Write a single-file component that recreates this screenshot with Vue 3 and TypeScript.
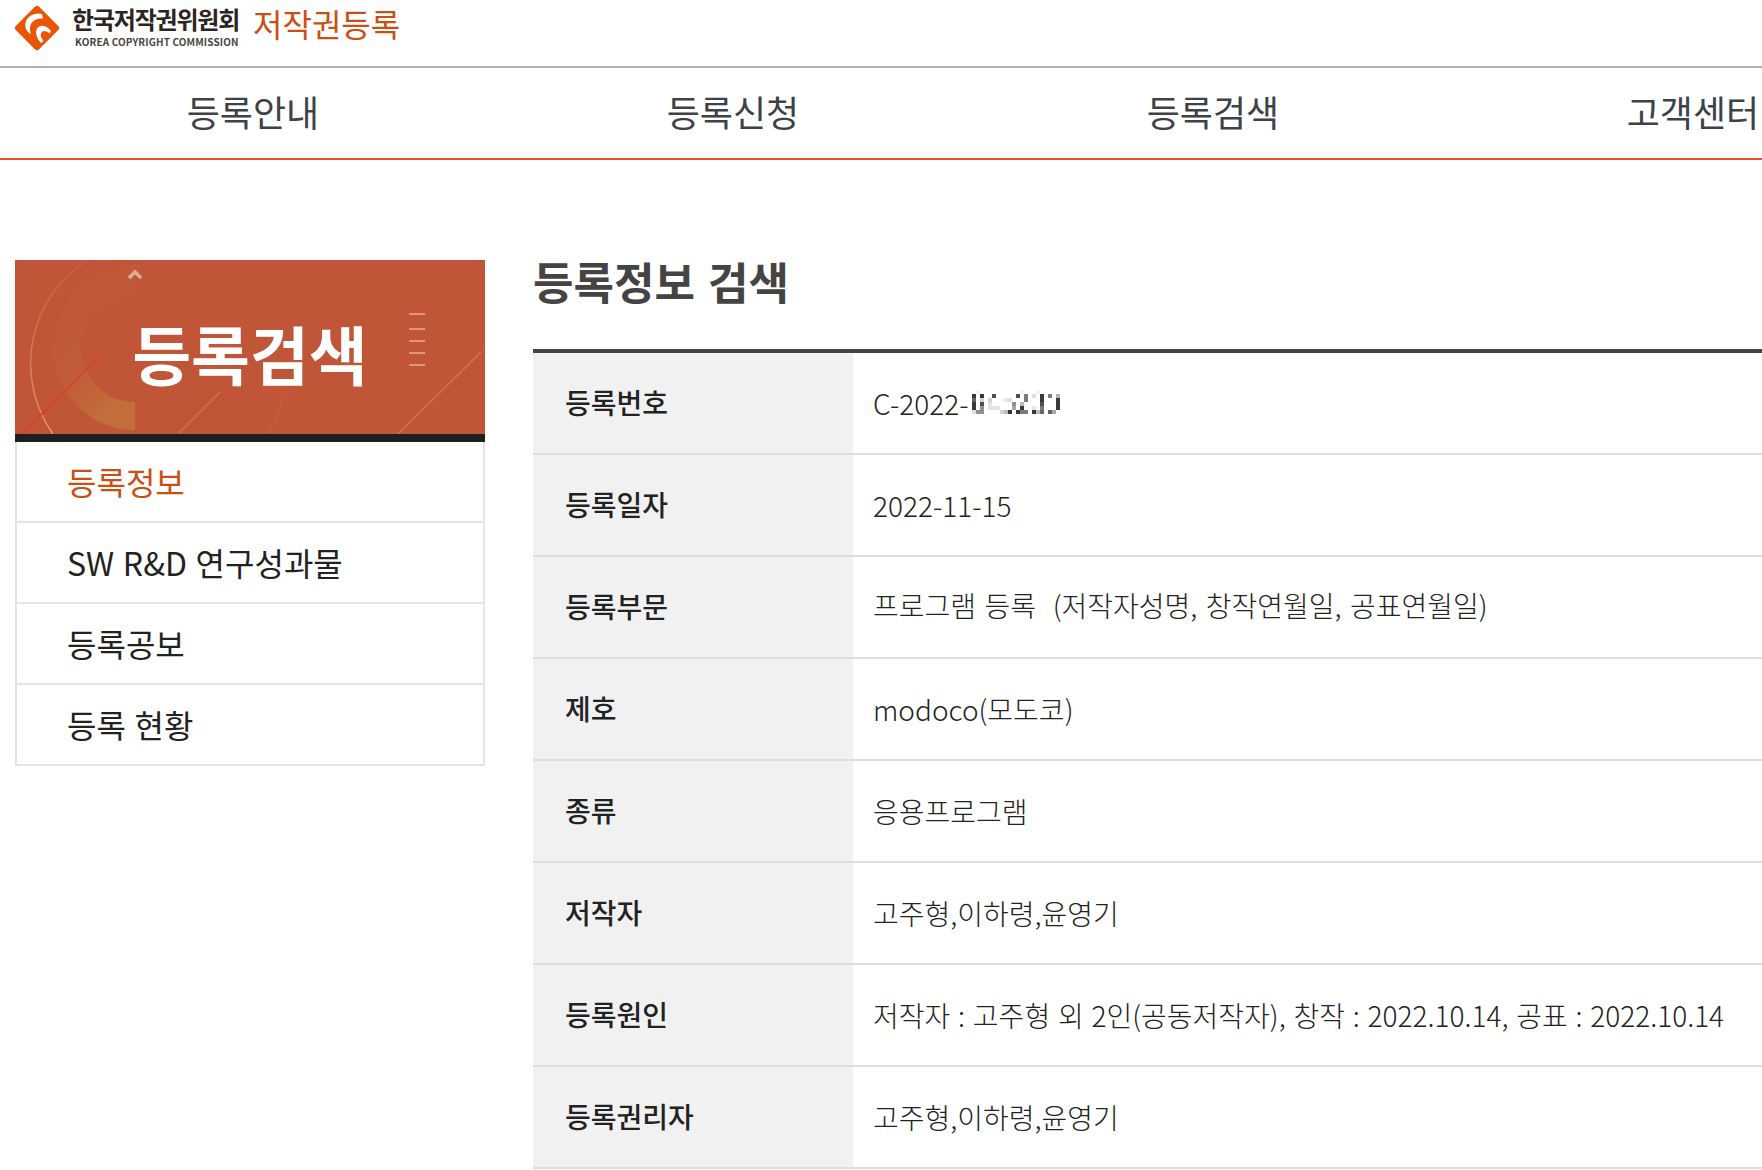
<script setup lang="ts">
interface Row { label: string; value: string; mosaic?: boolean; lift?: boolean }
const rows: Row[] = [
  { label: '등록번호', value: 'C-2022-', mosaic: true },
  { label: '등록일자', value: '2022-11-15' },
  { label: '등록부문', value: '프로그램 등록 \u00a0(저작자성명, 창작연월일, 공표연월일)', lift: true },
  { label: '제호', value: 'modoco(모도코)' },
  { label: '종류', value: '응용프로그램' },
  { label: '저작자', value: '고주형,이하령,윤영기' },
  { label: '등록원인', value: '저작자 : 고주형 외 2인(공동저작자), 창작 : 2022.10.14, 공표 : 2022.10.14' },
  { label: '등록권리자', value: '고주형,이하령,윤영기' },
]
const nav = ['등록안내', '등록신청', '등록검색', '고객센터']
const side = ['등록정보', 'SW R&D 연구성과물', '등록공보', '등록 현황']
const mosaicRows: [number, number][][] = [
  [[1, 0.05], [12, 0.05], [16, 0.06]],
  [[0, 0.9], [2, 0.9], [5, 0.8], [11, 0.8], [13, 0.6], [15, 0.15], [17, 0.9], [19, 0.6], [21, 0.35]],
  [[0, 0.7], [2, 0.2], [4, 0.2], [8, 0.1], [9, 0.15], [13, 0.6], [17, 0.9], [21, 0.9]],
  [[0, 0.9], [2, 0.8], [4, 0.12], [10, 0.5], [12, 0.3], [17, 0.8], [21, 0.9]],
  [[0, 0.9], [2, 0.5], [4, 0.12], [5, 0.12], [6, 0.12], [10, 0.4], [12, 0.9], [15, 0.1], [17, 0.6], [21, 0.9]],
  [[0, 0.15], [1, 0.5], [2, 0.5], [7, 0.2], [8, 0.3], [9, 0.9], [11, 0.9], [12, 0.6], [13, 0.6], [15, 0.9], [16, 0.3], [17, 0.7], [19, 0.7], [20, 0.4]],
]
const mosaic = mosaicRows.flatMap((cells, y) => cells.map(([x, o]) => ({ x, y, o })))
</script>

<template>
  <div class="page">
    <header class="top">
      <svg class="logo" viewBox="0 0 50 50" width="50" height="50" aria-hidden="true">
        <rect x="8.5" y="8.5" width="33" height="33" rx="3" transform="rotate(45 25 25)" fill="#ea5504" />
        <path d="M30 11 C23 9 15 13 13.5 20 C12.5 25 15 29 19 31 C17.5 27 17.5 24 19 21 C21 17 26 15 31 15.5 Z" fill="#fff" />
        <path d="M39 28 C35 23 30 21.5 26.5 24 C22.5 27 23.5 34 29 40 L31.5 38 C28.5 34 28 31 30 29 C32 27 35 28 37.5 30.5 Z" fill="#fff" />
      </svg>
      <div class="org">
        <div class="org-ko">한국저작권위원회</div>
        <div class="org-en">KOREA COPYRIGHT COMMISSION</div>
      </div>
      <div class="service">저작권등록</div>
    </header>
    <nav class="nav">
      <a v-for="item in nav" :key="item" class="nav-item">{{ item }}</a>
    </nav>
    <div class="body">
      <aside class="side">
        <div class="banner">
          <svg class="banner-art" viewBox="0 0 470 174" aria-hidden="true">
            <defs>
              <linearGradient id="ringFade" x1="0" y1="0" x2="0.5" y2="1">
                <stop offset="0" stop-color="#c8683f" stop-opacity="0.05" />
                <stop offset="0.6" stop-color="#c4693c" stop-opacity="0.35" />
                <stop offset="1" stop-color="#c2703a" stop-opacity="0.9" />
              </linearGradient>
              <linearGradient id="arcFade" x1="0" y1="0" x2="0" y2="1">
                <stop offset="0" stop-color="#dc8a60" stop-opacity="0.2" />
                <stop offset="1" stop-color="#e6a070" stop-opacity="0.85" />
              </linearGradient>
            </defs>
            <path d="M38 174 A122 122 0 0 1 73 0" fill="none" stroke="url(#arcFade)" stroke-width="1.6" />
            <path d="M120 156 A68 68 0 1 1 120 20" fill="none" stroke="url(#ringFade)" stroke-width="28" />
            <path d="M7 174 L83 97" stroke="#d8432a" stroke-width="1.8" />
            <path d="M163 174 L205 132" stroke="#d98a5e" stroke-width="1.8" opacity=".45" />
            <path d="M383 174 L466 92" stroke="#d98a5e" stroke-width="1.8" opacity=".5" />
            <path d="M252 174 C260 162 266 150 268 136" fill="none" stroke="#d98a5e" stroke-width="1.5" opacity=".25" />
            <path d="M114 18 L120 12 L126 18" fill="none" stroke="#dcae9a" stroke-width="3.5" />
            <g stroke="#dfa08c" stroke-width="1.8">
              <path d="M394 54 H410" /><path d="M394 69 H410" /><path d="M394 81 H410" /><path d="M394 93 H410" /><path d="M394 105 H410" />
            </g>
          </svg>
          <span class="banner-title">등록검색</span>
        </div>
        <ul class="menu">
          <li v-for="(item, i) in side" :key="item" class="menu-item" :class="{ active: i === 0 }">{{ item }}</li>
        </ul>
      </aside>
      <main class="main">
        <h1 class="title">등록정보 검색</h1>
        <div class="table">
          <div v-for="row in rows" :key="row.label" class="row">
            <div class="th">{{ row.label }}</div>
            <div class="td" :class="{ lift: row.lift }">
              <span>{{ row.value }}</span>
              <svg v-if="row.mosaic" class="mosaic" width="88" height="24" viewBox="0 0 22 6" shape-rendering="crispEdges" aria-hidden="true">
                <rect v-for="(m, i) in mosaic" :key="i" :x="m.x" :y="m.y" width="1" height="1" fill="#222" :opacity="m.o" />
              </svg>
            </div>
          </div>
        </div>
      </main>
    </div>
  </div>
</template>

<style>
html, body { margin: 0; background: #fff; overflow: hidden; }
</style>

<style scoped>
.page {
  width: 1762px;
  height: 1170px;
  overflow: hidden;
  background: #fff;
  font-family: "Noto Sans CJK KR", "Noto Sans", sans-serif;
  color: #222;
}
.top {
  height: 66px;
  display: flex;
  align-items: flex-start;
  border-bottom: 2px solid #b0b0b0;
  padding-left: 12px;
}
.logo { flex: none; margin-top: 3px; }
.org { width: 168px; margin-left: 10px; padding-top: 5px; flex: none; }
.org-ko { font-size: 24px; line-height: 28px; font-weight: 700; color: #2b2422; letter-spacing: -1.2px; white-space: nowrap; }
.org-en { font-size: 10px; line-height: 14px; font-weight: 700; color: #4a4442; letter-spacing: 0.12px; white-space: nowrap; margin: 2px 0 0 3px; }
.service { margin-left: 13px; font-size: 32px; line-height: 40px; color: #c94f14; margin-top: 3px; white-space: nowrap; }
.nav {
  height: 90px;
  display: flex;
  width: 1920px;
  padding-left: 13px;
  border-bottom: 2px solid #e8511d;
}
.nav-item {
  flex: none;
  width: 480px;
  text-align: center;
  font-size: 36px;
  line-height: 87px;
  color: #3c4248;
}
.body { display: flex; padding: 100px 0 0 15px; align-items: flex-start; }
.side { flex: none; width: 470px; }
.banner {
  position: relative;
  height: 174px;
  border-bottom: 8px solid #1f1f1f;
  background: #c05537;
  display: flex;
  align-items: center;
  justify-content: center;
}
.banner-art { position: absolute; inset: 0; width: 100%; height: 100%; }
.banner-title { position: relative; font-size: 64px; font-weight: 700; line-height: 1; color: #fff; margin-top: 9px; }
.menu { margin: 0; padding: 0; list-style: none; border: 2px solid #e4e4e4; border-top: 0; }
.menu-item {
  height: 79px;
  border-bottom: 2px solid #e4e4e4;
  padding-left: 50px;
  font-size: 32px;
  line-height: 78px;
  word-spacing: 1.5px;
  color: #222;
}
.menu-item:last-child { border-bottom: 0; }
.menu-item.active { color: #c94f14; }
.main { flex: none; width: 1300px; margin-left: 48px; }
.title { margin: 0; height: 89px; font-size: 44px; font-weight: 700; line-height: 42px; word-spacing: 3px; color: #444; box-sizing: border-box; }
.table { border-top: 4px solid #444; }
.row { display: flex; height: 102px; box-sizing: border-box; border-bottom: 2px solid #dedede; }
.th {
  flex: none;
  width: 320px;
  padding-left: 32px;
  box-sizing: border-box;
  background: #f1f1f1;
  font-size: 28px;
  font-weight: 500;
  line-height: 99px;
  color: #222;
}
.td {
  flex: 1;
  padding-left: 20px;
  font-size: 28px;
  line-height: 100px;
  word-spacing: 1.6px;
  color: #222;
  white-space: nowrap;
  display: flex;
  align-items: center;
  font-weight: 300;
}
.td.lift { word-spacing: 2.2px; }
.td.lift span { margin-top: -4px; }
.mosaic { flex: none; margin: -2px 0 0 4px; }
</style>
